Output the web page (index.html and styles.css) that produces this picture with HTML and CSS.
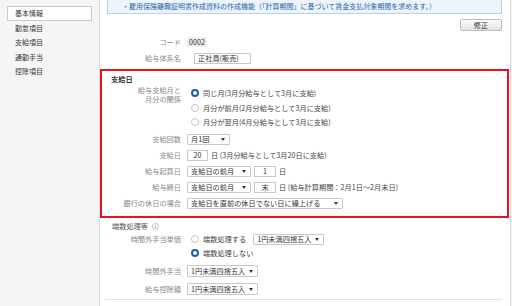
FILE: index.html
```html
<!DOCTYPE html>
<html lang="ja">
<head>
    <meta charset="UTF-8">
    <meta name="viewport" content="width=device-width, initial-scale=1.0">
    <title>給与体系 基本情報</title>
    <link rel="stylesheet" href="styles.css">
</head>
<body>

<div class="page">
    <nav class="side-menu">
        <div class="side-item active">基本情報</div>
        <div class="side-item">勤怠項目</div>
        <div class="side-item">支給項目</div>
        <div class="side-item">通勤手当</div>
        <div class="side-item">控除項目</div>
    </nav>

    <div class="main">
        <div class="notice">・雇用保険離職証明書作成資料の作成機能（「計算期間」に基づいて賃金支払対象期間を求めます。）</div>

        <div class="toolbar">
            <button class="btn">修正</button>
        </div>

        <div class="info-row">
            <span class="label">コード</span>
            <span class="code-value">0002</span>
        </div>
        <div class="info-row second">
            <span class="label">給与体系名</span>
            <span class="text-box">正社員(販売)</span>
        </div>

        <!-- 支給日 -->
        <section class="pay-day">
            <h3>支給日</h3>

            <div class="form-group">
                <div class="label label-2line">給与支給月と<br>月分の関係</div>
                <div class="radio-list">
                    <div class="radio-row"><span class="radio checked"></span>同じ月(3月分給与として3月に支給)</div>
                    <div class="radio-row"><span class="radio"></span>月分が前月(2月分給与として3月に支給)</div>
                    <div class="radio-row"><span class="radio"></span>月分が翌月(4月分給与として3月に支給)</div>
                </div>
            </div>

            <div class="form-row first">
                <span class="label">支給回数</span>
                <span class="select w-43">月1回</span>
            </div>
            <div class="form-row">
                <span class="label">支給日</span>
                <span class="num-box">20</span>
                <span class="unit">日 (3月分給与として3月20日に支給)</span>
            </div>
            <div class="form-row">
                <span class="label">給与起算日</span>
                <span class="select w-64">支給日の前月</span>
                <span class="num-box gap">1</span>
                <span class="unit">日</span>
            </div>
            <div class="form-row">
                <span class="label">給与締日</span>
                <span class="select w-64">支給日の前月</span>
                <span class="num-box gap">末</span>
                <span class="unit">日 (給与計算期間：2月1日〜2月末日)</span>
            </div>
            <div class="form-row">
                <span class="label">銀行の休日の場合</span>
                <span class="select w-156">支給日を直前の休日でない日に繰上げる</span>
            </div>
        </section>

        <!-- 端数処理 -->
        <div class="section-title">
            端数処理等
            <svg class="info-icon" width="7" height="7" viewBox="0 0 14 14">
                <circle cx="7" cy="7" r="6" fill="none" stroke="#999" stroke-width="1.2"/>
                <circle cx="7" cy="4" r="1" fill="#999"/>
                <rect x="6.3" y="6" width="1.4" height="4.5" fill="#999"/>
            </svg>
        </div>

        <div class="form-group">
            <span class="label label-line">時間外手当単価</span>
            <div class="radio-list">
                <div class="radio-row short"><span class="radio"></span>端数処理する<span class="select w-71 gap-l">1円未満四捨五入</span></div>
                <div class="radio-row short"><span class="radio checked"></span>端数処理しない</div>
            </div>
        </div>

        <div class="form-row tall first">
            <span class="label">時間外手当</span>
            <span class="select w-71 high">1円未満四捨五入</span>
        </div>
        <div class="form-row tall">
            <span class="label">給与控除額</span>
            <span class="select w-71 high">1円未満四捨五入</span>
        </div>

        <div class="divider"></div>
    </div>
</div>

</body>
</html>
```

FILE: styles.css
```css
/* 給与体系 基本情報画面 */
* {
    box-sizing: border-box;
}

body {
    margin: 0;
    font-family: "Noto Sans CJK JP", sans-serif;
    font-size: 7.2px;
    color: #444;
    background-color: #f5f5f5;
}

.page {
    display: flex;
    height: 306px;
    overflow: hidden;
}

/* 左メニュー */
.side-menu {
    width: 100px;
    flex-shrink: 0;
    padding: 6px 7px 0;
    background-color: #f5f5f5;
    border-right: 1px solid #d9d9d9;
}

.side-item {
    height: 14.6px;
    line-height: 12.6px;
    padding-left: 7px;
    border: 1px solid transparent;
    color: #333;
    font-size: 7px;
}

.side-item.active {
    background-color: white;
    border-color: #c9c9c9;
}

/* メイン */
.main {
    flex: 1;
    margin-right: 1px;
    padding: 0 8px 0 7px;
    background-color: white;
    border-right: 1px solid #d6d6d6;
}

.notice {
    height: 14px;
    padding-left: 14px;
    line-height: 13px;
    font-size: 7px;
    color: #2a65b0;
    background-color: #edf4fc;
    border: 1px solid #b7d0ec;
    border-top: none;
    white-space: nowrap;
}

.toolbar {
    margin-top: 5px;
    height: 12px;
    text-align: right;
}

.btn {
    width: 42px;
    height: 12px;
    padding: 0;
    font: inherit;
    color: #333;
    background: linear-gradient(#fbfbfb, #e4e4e4);
    border: 1px solid #bcbcbc;
    border-radius: 2px;
}

.label {
    width: 74px;
    margin-right: 6px;
    flex-shrink: 0;
    text-align: right;
    color: #888;
    white-space: nowrap;
}

.info-row {
    display: flex;
    align-items: center;
    height: 12px;
    margin-top: 5px;
}

.info-row.second {
    margin-top: 4px;
}

.code-value {
    height: 10px;
    padding: 0 2px;
    line-height: 10px;
    color: #333;
    background-color: #eee;
}

.text-box {
    width: 57px;
    height: 11px;
    margin-left: 7px;
    padding-left: 3px;
    line-height: 9px;
    color: #333;
    border: 1px solid #c8c8c8;
}

/* 支給日 (赤枠) */
.pay-day {
    margin: 5px -7px 0;
    padding: 1px 5px 5px;
    border: 2px solid #e8141c;
}

.pay-day h3 {
    margin: 0 0 0 4px;
    font-size: 7.2px;
    line-height: 14px;
    color: #333;
}

.form-group {
    display: flex;
    align-items: flex-start;
}

.label-2line {
    line-height: 8.5px;
}

.label-line {
    line-height: 14px;
}

.radio-row {
    display: flex;
    align-items: center;
    height: 14.5px;
    white-space: nowrap;
}

.radio-row.short {
    height: 14px;
}

.radio {
    width: 8px;
    height: 8px;
    margin: 0 4px;
    flex-shrink: 0;
    background-color: white;
    border: 1px solid #c4c4c4;
    border-radius: 50%;
}

.radio.checked {
    border: 2.2px solid #1d5eb0;
}

.form-row {
    display: flex;
    align-items: center;
    height: 16px;
    white-space: nowrap;
}

.form-row.first {
    margin-top: 1.5px;
}

.form-row.tall {
    height: 18px;
}

.form-row.tall.first {
    margin-top: 2px;
}

.select {
    display: flex;
    align-items: center;
    height: 11px;
    padding: 0 4px 0 3px;
    flex-shrink: 0;
    color: #333;
    background-color: white;
    border: 1px solid #c8c8c8;
    border-radius: 1px;
}

.select::after {
    content: "";
    margin-left: auto;
    border-left: 2px solid transparent;
    border-right: 2px solid transparent;
    border-top: 3px solid #333;
}

.select.high {
    height: 12px;
}

.w-43 { width: 43px; }
.w-64 { width: 64px; }
.w-71 { width: 71px; }
.w-156 { width: 156px; }

.gap-l {
    margin-left: 7px;
}

.num-box {
    width: 21px;
    height: 11px;
    flex-shrink: 0;
    line-height: 9px;
    text-align: center;
    color: #333;
    border: 1px solid #c8c8c8;
}

.num-box.gap {
    width: 22px;
    margin-left: 3px;
}

.unit {
    margin-left: 3px;
    color: #444;
}

/* 端数処理 */
.section-title {
    display: flex;
    align-items: center;
    margin-top: 2px;
    padding-left: 5px;
    line-height: 12px;
    color: #555;
}

.info-icon {
    margin-left: 4px;
}

.divider {
    margin: 1px 0 0 -2px;
    border-top: 1px solid #e2e2e2;
}
```
